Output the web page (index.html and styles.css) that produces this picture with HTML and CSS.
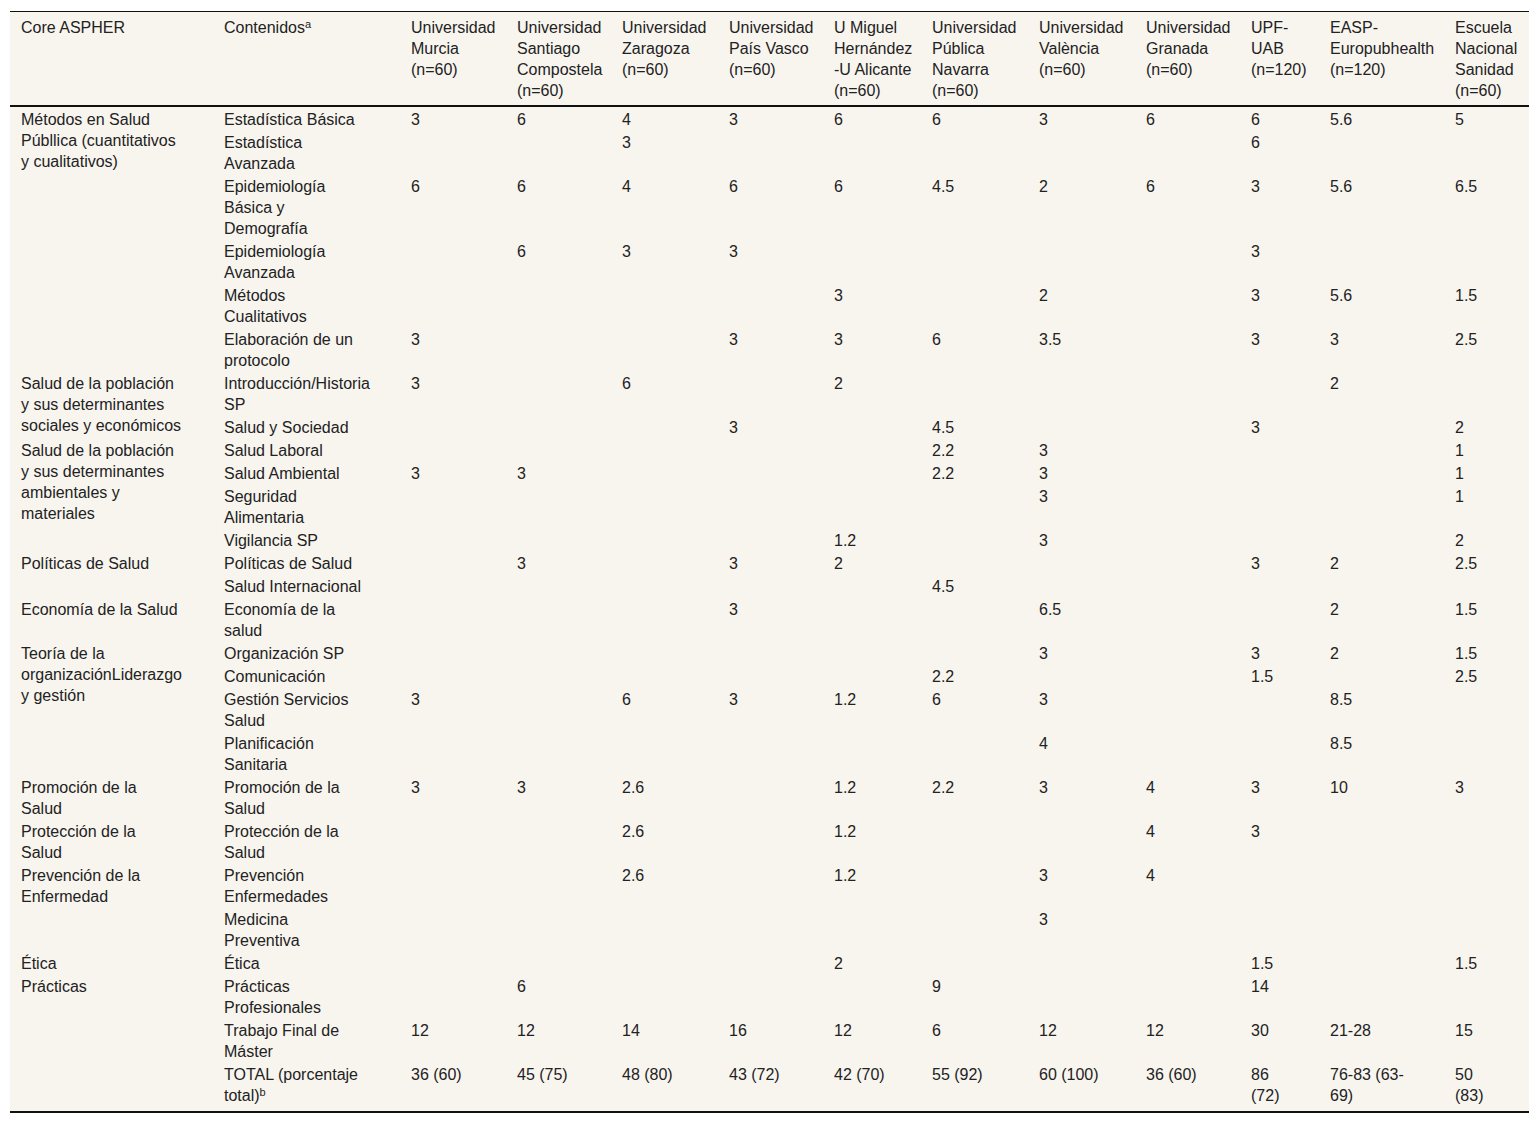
FILE: index.html
```html
<!DOCTYPE html>
<html lang="es">
<head>
<meta charset="utf-8">
<title>Core ASPHER</title>
<link rel="stylesheet" href="styles.css">
</head>
<body>
<table class="grid">
  <colgroup>
    <col class="w-cat"><col class="w-cont">
    <col class="w106"><col class="w105"><col class="w107"><col class="w105"><col class="w98">
    <col class="w107"><col class="w107"><col class="w105"><col class="w79"><col class="w125"><col class="w85">
  </colgroup>
  <thead>
    <tr>
      <th class="cat">Core ASPHER</th>
      <th class="cont">Contenidos<sup>a</sup></th>
      <th>Universidad Murcia (n=60)</th>
      <th>Universidad Santiago Compostela (n=60)</th>
      <th>Universidad Zaragoza (n=60)</th>
      <th>Universidad País Vasco (n=60)</th>
      <th>U Miguel Hernández -U Alicante (n=60)</th>
      <th>Universidad Pública Navarra (n=60)</th>
      <th>Universidad València (n=60)</th>
      <th>Universidad Granada (n=60)</th>
      <th>UPF-UAB (n=120)</th>
      <th>EASP-Europubhealth (n=120)</th>
      <th>Escuela Nacional Sanidad (n=60)</th>
    </tr>
  </thead>
  <tbody>
    <tr class="first">
      <td class="cat" rowspan="6">Métodos en Salud Públlica (cuantitativos y cualitativos)</td>
      <td class="cont">Estadística Básica</td>
      <td>3</td><td>6</td><td>4</td><td>3</td><td>6</td><td>6</td><td>3</td><td>6</td><td>6</td><td>5.6</td><td>5</td>
    </tr>
    <tr>
      <td class="cont">Estadística Avanzada</td>
      <td></td><td></td><td>3</td><td></td><td></td><td></td><td></td><td></td><td>6</td><td></td><td></td>
    </tr>
    <tr>
      <td class="cont">Epidemiología Básica y Demografía</td>
      <td>6</td><td>6</td><td>4</td><td>6</td><td>6</td><td>4.5</td><td>2</td><td>6</td><td>3</td><td>5.6</td><td>6.5</td>
    </tr>
    <tr>
      <td class="cont">Epidemiología Avanzada</td>
      <td></td><td>6</td><td>3</td><td>3</td><td></td><td></td><td></td><td></td><td>3</td><td></td><td></td>
    </tr>
    <tr>
      <td class="cont">Métodos Cualitativos</td>
      <td></td><td></td><td></td><td></td><td>3</td><td></td><td>2</td><td></td><td>3</td><td>5.6</td><td>1.5</td>
    </tr>
    <tr>
      <td class="cont">Elaboración de un protocolo</td>
      <td>3</td><td></td><td></td><td>3</td><td>3</td><td>6</td><td>3.5</td><td></td><td>3</td><td>3</td><td>2.5</td>
    </tr>
    <tr>
      <td class="cat" rowspan="2">Salud de la población y sus determinantes sociales y económicos</td>
      <td class="cont">Introducción/Historia SP</td>
      <td>3</td><td></td><td>6</td><td></td><td>2</td><td></td><td></td><td></td><td></td><td>2</td><td></td>
    </tr>
    <tr>
      <td class="cont">Salud y Sociedad</td>
      <td></td><td></td><td></td><td>3</td><td></td><td>4.5</td><td></td><td></td><td>3</td><td></td><td>2</td>
    </tr>
    <tr>
      <td class="cat" rowspan="4">Salud de la población y sus determinantes ambientales y materiales</td>
      <td class="cont">Salud Laboral</td>
      <td></td><td></td><td></td><td></td><td></td><td>2.2</td><td>3</td><td></td><td></td><td></td><td>1</td>
    </tr>
    <tr>
      <td class="cont">Salud Ambiental</td>
      <td>3</td><td>3</td><td></td><td></td><td></td><td>2.2</td><td>3</td><td></td><td></td><td></td><td>1</td>
    </tr>
    <tr>
      <td class="cont">Seguridad Alimentaria</td>
      <td></td><td></td><td></td><td></td><td></td><td></td><td>3</td><td></td><td></td><td></td><td>1</td>
    </tr>
    <tr>
      <td class="cont">Vigilancia SP</td>
      <td></td><td></td><td></td><td></td><td>1.2</td><td></td><td>3</td><td></td><td></td><td></td><td>2</td>
    </tr>
    <tr>
      <td class="cat" rowspan="2">Políticas de Salud</td>
      <td class="cont">Políticas de Salud</td>
      <td></td><td>3</td><td></td><td>3</td><td>2</td><td></td><td></td><td></td><td>3</td><td>2</td><td>2.5</td>
    </tr>
    <tr>
      <td class="cont">Salud Internacional</td>
      <td></td><td></td><td></td><td></td><td></td><td>4.5</td><td></td><td></td><td></td><td></td><td></td>
    </tr>
    <tr>
      <td class="cat">Economía de la Salud</td>
      <td class="cont">Economía de la salud</td>
      <td></td><td></td><td></td><td>3</td><td></td><td></td><td>6.5</td><td></td><td></td><td>2</td><td>1.5</td>
    </tr>
    <tr>
      <td class="cat" rowspan="4">Teoría de la organizaciónLiderazgo y gestión</td>
      <td class="cont">Organización SP</td>
      <td></td><td></td><td></td><td></td><td></td><td></td><td>3</td><td></td><td>3</td><td>2</td><td>1.5</td>
    </tr>
    <tr>
      <td class="cont">Comunicación</td>
      <td></td><td></td><td></td><td></td><td></td><td>2.2</td><td></td><td></td><td>1.5</td><td></td><td>2.5</td>
    </tr>
    <tr>
      <td class="cont">Gestión Servicios Salud</td>
      <td>3</td><td></td><td>6</td><td>3</td><td>1.2</td><td>6</td><td>3</td><td></td><td></td><td>8.5</td><td></td>
    </tr>
    <tr>
      <td class="cont">Planificación Sanitaria</td>
      <td></td><td></td><td></td><td></td><td></td><td></td><td>4</td><td></td><td></td><td>8.5</td><td></td>
    </tr>
    <tr>
      <td class="cat">Promoción de la<br>Salud</td>
      <td class="cont">Promoción de la Salud</td>
      <td>3</td><td>3</td><td>2.6</td><td></td><td>1.2</td><td>2.2</td><td>3</td><td>4</td><td>3</td><td>10</td><td>3</td>
    </tr>
    <tr>
      <td class="cat">Protección de la<br>Salud</td>
      <td class="cont">Protección de la Salud</td>
      <td></td><td></td><td>2.6</td><td></td><td>1.2</td><td></td><td></td><td>4</td><td>3</td><td></td><td></td>
    </tr>
    <tr>
      <td class="cat" rowspan="2">Prevención de la Enfermedad</td>
      <td class="cont">Prevención Enfermedades</td>
      <td></td><td></td><td>2.6</td><td></td><td>1.2</td><td></td><td>3</td><td>4</td><td></td><td></td><td></td>
    </tr>
    <tr>
      <td class="cont">Medicina<br>Preventiva</td>
      <td></td><td></td><td></td><td></td><td></td><td></td><td>3</td><td></td><td></td><td></td><td></td>
    </tr>
    <tr>
      <td class="cat">Ética</td>
      <td class="cont">Ética</td>
      <td></td><td></td><td></td><td></td><td>2</td><td></td><td></td><td></td><td>1.5</td><td></td><td>1.5</td>
    </tr>
    <tr>
      <td class="cat" rowspan="3">Prácticas</td>
      <td class="cont">Prácticas Profesionales</td>
      <td></td><td>6</td><td></td><td></td><td></td><td>9</td><td></td><td></td><td>14</td><td></td><td></td>
    </tr>
    <tr>
      <td class="cont">Trabajo Final de Máster</td>
      <td>12</td><td>12</td><td>14</td><td>16</td><td>12</td><td>6</td><td>12</td><td>12</td><td>30</td><td>21-28</td><td>15</td>
    </tr>
    <tr class="last">
      <td class="cont">TOTAL (porcentaje total)<sup>b</sup></td>
      <td>36 (60)</td><td>45 (75)</td><td>48 (80)</td><td>43 (72)</td><td>42 (70)</td><td>55 (92)</td><td>60 (100)</td><td>36 (60)</td><td>86 (72)</td><td>76-83 (63-69)</td><td>50 (83)</td>
    </tr>
  </tbody>
</table>
</body>
</html>
```

FILE: styles.css
```css
html, body {
  margin: 0;
  background: #ffffff;
}

body {
  padding: 11px 11px 12px 10px;
  font-family: "Liberation Sans", Arial, sans-serif;
  font-size: 16px;
  line-height: 21px;
  color: #222222;
}

.grid {
  table-layout: fixed;
  width: 1519px;
  border-collapse: collapse;
  background: #f8f5ef;
  border-top: 1px solid #111;
  border-bottom: 2px solid #111;
}

.w-cat { width: 203px; }
.w-cont { width: 187px; }
.w106 { width: 106px; }
.w105 { width: 105px; }
.w107 { width: 107px; }
.w98 { width: 98px; }
.w79 { width: 79px; }
.w125 { width: 125px; }
.w85 { width: 85px; }

.grid th,
.grid td {
  text-align: left;
  vertical-align: top;
  font-weight: normal;
  padding: 1px 8px 1px 11px;
}

.grid thead th {
  padding-top: 5px;
  padding-bottom: 4px;
  border-bottom: 2px solid #111;
}

.grid tbody tr.first td {
  padding-top: 2px;
}

.grid tbody tr.last td {
  padding-bottom: 5px;
}

.grid .cat { padding-right: 28px; }
.grid .cont { padding-right: 29px; }

.grid tr > :nth-last-child(7) { padding-right: 6px; }
.grid tr > :nth-last-child(3) { padding-right: 22px; }
.grid tr > :nth-last-child(2) { padding-right: 30px; }
.grid tr > :nth-last-child(1) { padding-right: 26px; }

sup {
  font-size: 11px;
  line-height: 0;
  vertical-align: 5px;
}
```
